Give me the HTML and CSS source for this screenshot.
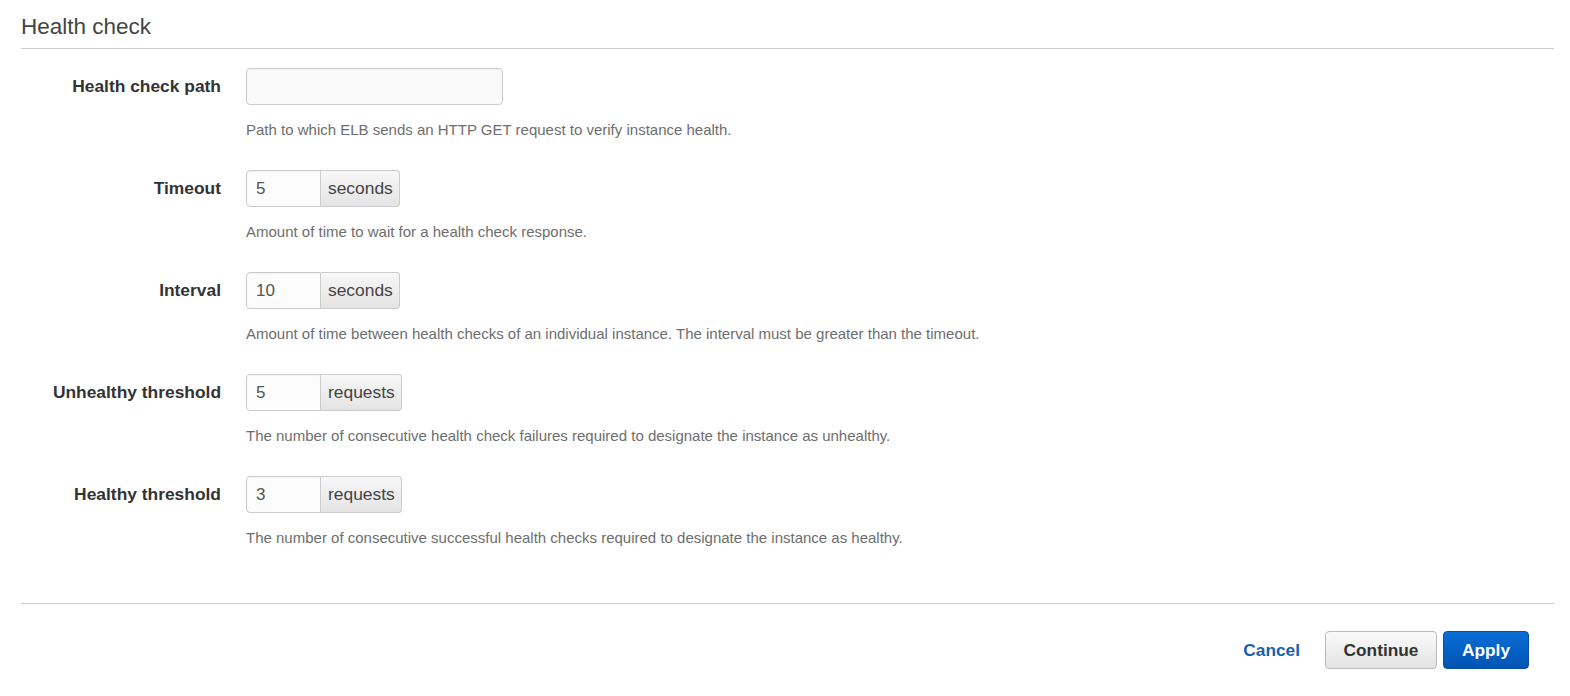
FILE: index.html
```html
<!DOCTYPE html>
<html>
<head>
<meta charset="utf-8">
<link rel="stylesheet" href="styles.css">
</head>
<body>
<div class="page">
  <h2 class="title">Health check</h2>
  <div class="form">
    <div class="row">
      <div class="label">Health check path</div>
      <div class="field">
        <input class="text wide" type="text" value="">
        <div class="help">Path to which ELB sends an HTTP GET request to verify instance health.</div>
      </div>
    </div>
    <div class="row">
      <div class="label">Timeout</div>
      <div class="field">
        <div class="group"><input class="text num" type="text" value="5"><span class="addon">seconds</span></div>
        <div class="help">Amount of time to wait for a health check response.</div>
      </div>
    </div>
    <div class="row">
      <div class="label">Interval</div>
      <div class="field">
        <div class="group"><input class="text num" type="text" value="10"><span class="addon">seconds</span></div>
        <div class="help">Amount of time between health checks of an individual instance. The interval must be greater than the timeout.</div>
      </div>
    </div>
    <div class="row">
      <div class="label">Unhealthy threshold</div>
      <div class="field">
        <div class="group"><input class="text num" type="text" value="5"><span class="addon">requests</span></div>
        <div class="help">The number of consecutive health check failures required to designate the instance as unhealthy.</div>
      </div>
    </div>
    <div class="row">
      <div class="label">Healthy threshold</div>
      <div class="field">
        <div class="group"><input class="text num" type="text" value="3"><span class="addon">requests</span></div>
        <div class="help">The number of consecutive successful health checks required to designate the instance as healthy.</div>
      </div>
    </div>
  </div>
  <div class="footer">
    <a class="cancel" href="#">Cancel</a>
    <button class="btn secondary">Continue</button>
    <button class="btn primary">Apply</button>
  </div>
</div>
</body>
</html>
```
FILE: styles.css
```css
html, body { margin: 0; padding: 0; background: #fff; }
body { font-family: "Liberation Sans", Arial, sans-serif; color: #333; }
.page { padding: 0 16px 0 21px; }
.title {
  margin: 0;
  padding-top: 13px;
  height: 35px;
  font-size: 22.5px;
  line-height: 28px;
  font-weight: normal;
  color: #444;
  border-bottom: 1px solid #ccc;
}
.form { padding-top: 19px; }
.row { display: flex; gap: 25px; margin-bottom: 30px; }
.row:last-child { margin-bottom: 0; }
.label {
  width: 200px;
  flex: none;
  text-align: right;
  font-weight: bold;
  font-size: 17.4px;
  line-height: 37px;
  color: #333;
}
.field { display: flex; flex-direction: column; align-items: flex-start; }
.text {
  box-sizing: border-box;
  height: 37px;
  border: 1px solid #ccc;
  border-radius: 4px;
  background: #fafafa;
  font-family: "Liberation Sans", Arial, sans-serif;
  font-size: 17px;
  color: #555;
  padding: 0 9px;
  margin: 0;
  outline: none;
  box-shadow: inset 0 1px 1px rgba(0,0,0,0.04);
}
.wide { width: 257px; }
.group { display: flex; height: 37px; }
.num { width: 75px; border-radius: 4px 0 0 4px; background: #fcfcfc; }
.addon {
  box-sizing: border-box;
  height: 37px;
  border: 1px solid #ccc;
  border-left: none;
  border-radius: 0 4px 4px 0;
  background: linear-gradient(#f7f7f7, #e4e4e4);
  font-size: 17.4px;
  line-height: 35px;
  color: #444;
  padding: 0 6px 0 7px;
}
.help {
  margin-top: 15px;
  font-size: 15px;
  line-height: 20px;
  color: #6e6e6e;
}
.footer {
  margin-top: 55px;
  border-top: 1px solid #ccc;
  display: flex;
  justify-content: flex-end;
  align-items: center;
  padding: 27px 25px 0 0;
}
.cancel {
  font-weight: bold;
  font-size: 17.3px;
  color: #1a5fac;
  text-decoration: none;
  margin-right: 25px;
}
.btn {
  box-sizing: border-box;
  height: 38px;
  border-radius: 4px;
  font-family: "Liberation Sans", Arial, sans-serif;
  font-weight: bold;
  font-size: 17.3px;
  padding: 0;
  margin: 0;
}
.secondary {
  width: 112px;
  border: 1px solid #bbb;
  background: linear-gradient(#fafafa, #e3e3e3);
  color: #333;
  margin-right: 6px;
}
.primary {
  width: 86px;
  border: 1px solid #0b4f9e;
  background: linear-gradient(#0a6ed6, #0054b3);
  color: #fff;
}
```
